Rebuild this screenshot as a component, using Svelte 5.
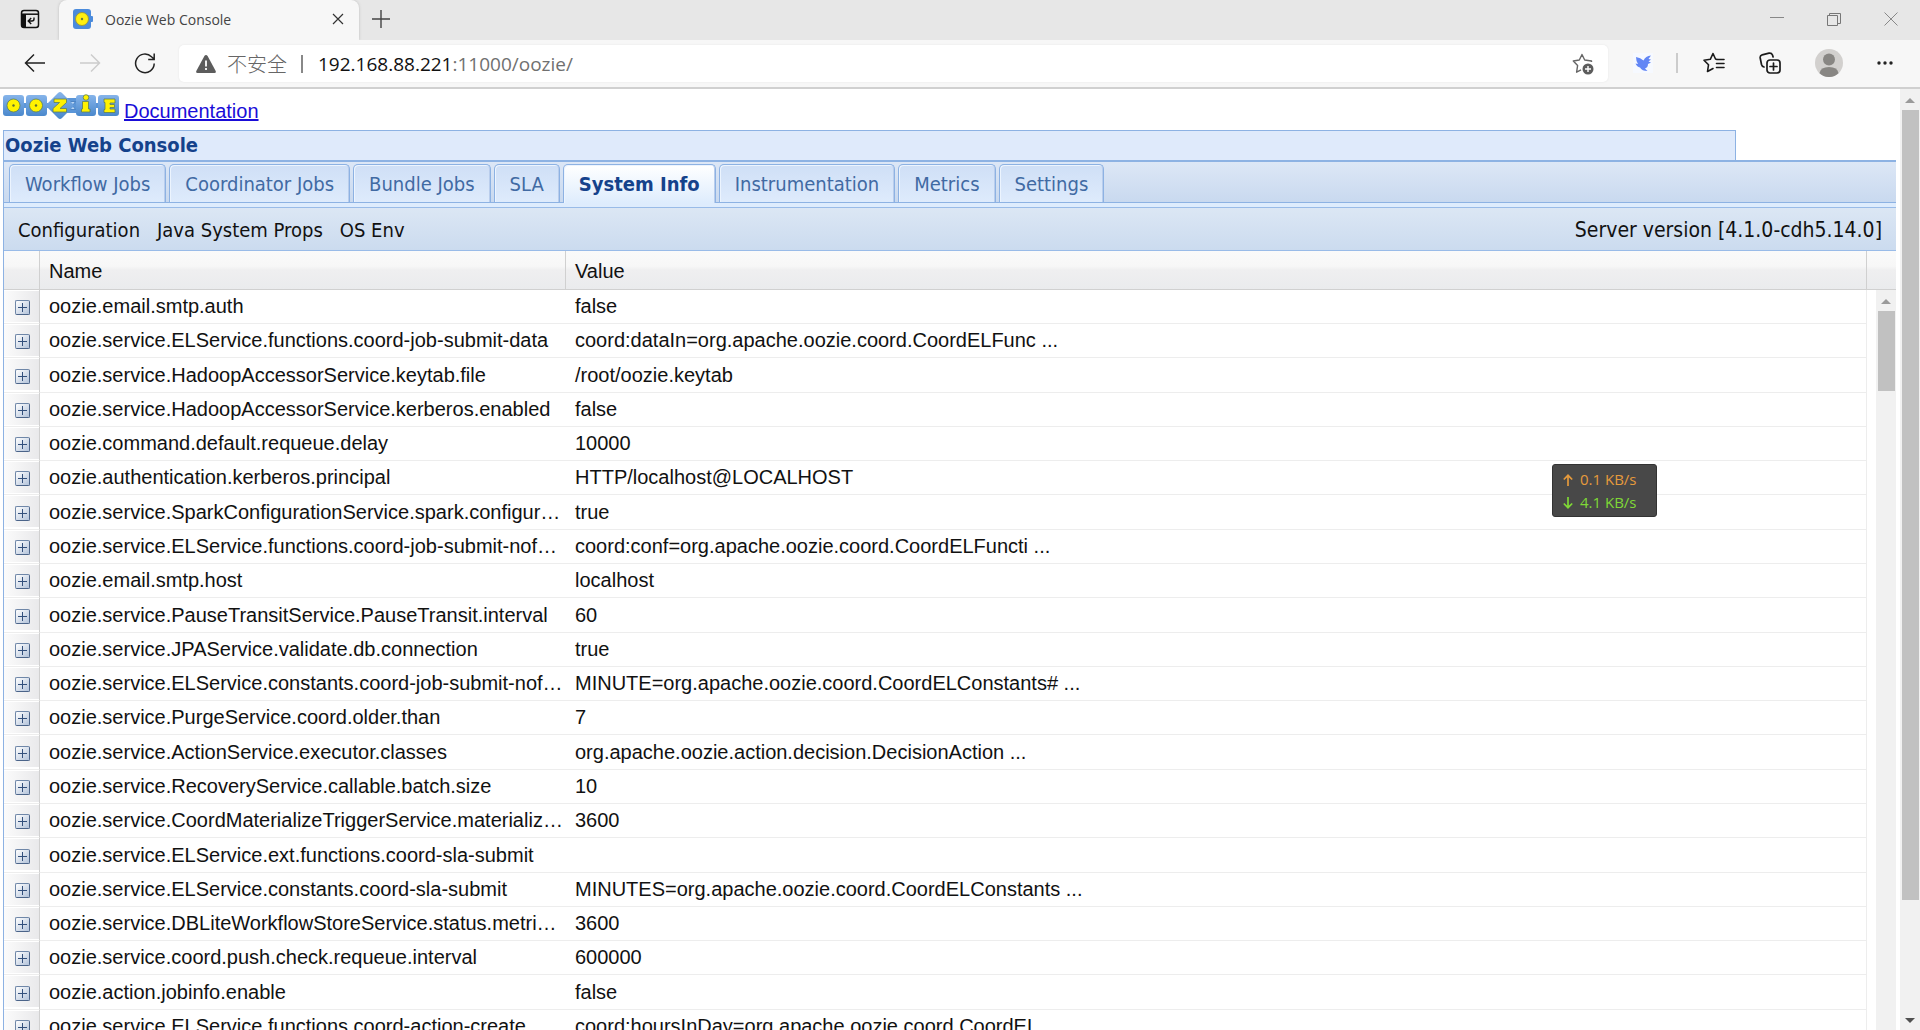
<script>
  const tabs = [
    'Workflow Jobs',
    'Coordinator Jobs',
    'Bundle Jobs',
    'SLA',
    'System Info',
    'Instrumentation',
    'Metrics',
    'Settings'
  ];

  const rows = [
    ['oozie.email.smtp.auth', 'false'],
    ['oozie.service.ELService.functions.coord-job-submit-data', 'coord:dataIn=org.apache.oozie.coord.CoordELFunc ...'],
    ['oozie.service.HadoopAccessorService.keytab.file', '/root/oozie.keytab'],
    ['oozie.service.HadoopAccessorService.kerberos.enabled', 'false'],
    ['oozie.command.default.requeue.delay', '10000'],
    ['oozie.authentication.kerberos.principal', 'HTTP/localhost@LOCALHOST'],
    ['oozie.service.SparkConfigurationService.spark.configur…', 'true'],
    ['oozie.service.ELService.functions.coord-job-submit-nof…', 'coord:conf=org.apache.oozie.coord.CoordELFuncti ...'],
    ['oozie.email.smtp.host', 'localhost'],
    ['oozie.service.PauseTransitService.PauseTransit.interval', '60'],
    ['oozie.service.JPAService.validate.db.connection', 'true'],
    ['oozie.service.ELService.constants.coord-job-submit-nof…', 'MINUTE=org.apache.oozie.coord.CoordELConstants# ...'],
    ['oozie.service.PurgeService.coord.older.than', '7'],
    ['oozie.service.ActionService.executor.classes', 'org.apache.oozie.action.decision.DecisionAction ...'],
    ['oozie.service.RecoveryService.callable.batch.size', '10'],
    ['oozie.service.CoordMaterializeTriggerService.materializ…', '3600'],
    ['oozie.service.ELService.ext.functions.coord-sla-submit', ''],
    ['oozie.service.ELService.constants.coord-sla-submit', 'MINUTES=org.apache.oozie.coord.CoordELConstants ...'],
    ['oozie.service.DBLiteWorkflowStoreService.status.metri…', '3600'],
    ['oozie.service.coord.push.check.requeue.interval', '600000'],
    ['oozie.action.jobinfo.enable', 'false'],
    ['oozie.service.ELService.functions.coord-action-create', 'coord:hoursInDay=org.apache.oozie.coord.CoordEL ...']
  ];

  let active = $state('System Info');
</script>

<div class="window">
  <header class="titlebar">
    <button class="icon-btn tab-actions" aria-label="Tab actions">
      <svg width="20" height="20" viewBox="0 0 20 20" fill="none" stroke="#111" stroke-width="1.5">
        <rect x="1.500" y="1.500" width="17" height="17" rx="2.500" />
        <path d="M1.500 5.200h17" />
        <path d="M4 5v13" stroke-width="4" />
        <path d="M14 8.500v1.500q0 2-2 2H8.800M11.200 9l-3 3 3 3" stroke-width="1.400" />
      </svg>
    </button>
    <div class="browser-tab">
      <svg width="20" height="20" viewBox="0 0 20 20">
        <rect x="0" y="0" width="18" height="20" rx="3" fill="#4b8bdc" />
        <rect x="17" y="7" width="3" height="6" rx="1" fill="#4b8bdc" />
        <circle cx="9" cy="10" r="6.500" fill="#ffef10" stroke="#9c9a3c" />
        <circle cx="9" cy="10" r="1.200" fill="#6d7a3a" />
      </svg>
      <span>Oozie Web Console</span>
      <button class="icon-btn" aria-label="Close tab">
        <svg width="12" height="12" viewBox="0 0 12 12" stroke="#333" stroke-width="1.200"><path d="M1 1l10 10M11 1L1 11" /></svg>
      </button>
    </div>
    <button class="icon-btn new-tab" aria-label="New tab">
      <svg width="18" height="18" viewBox="0 0 18 18" stroke="#444" stroke-width="1.400"><path d="M9 0v18M0 9h18" /></svg>
    </button>
    <div class="controls">
      <button class="icon-btn" aria-label="Minimize">
        <svg width="14" height="14" viewBox="0 0 14 14" stroke="#888"><path d="M0 5.500h14" /></svg>
      </button>
      <button class="icon-btn" aria-label="Restore">
        <svg width="14" height="14" viewBox="0 0 14 14" fill="none" stroke="#777"><path d="M.5 3.500h10v10H.5zM2.500 3.500v-2h11v10h-3" /></svg>
      </button>
      <button class="icon-btn" aria-label="Close">
        <svg width="14" height="14" viewBox="0 0 14 14" stroke="#888"><path d="M.5.5l13 13M13.500.5l-13 13" /></svg>
      </button>
    </div>
  </header>

  <nav class="toolbar">
    <button class="icon-btn" aria-label="Back">
      <svg width="22" height="20" viewBox="0 0 22 20" fill="none" stroke="#222" stroke-width="1.500"><path d="M21 10H2M10 1.500L1.500 10l8.500 8.500" /></svg>
    </button>
    <button class="icon-btn" aria-label="Forward" disabled>
      <svg width="22" height="20" viewBox="0 0 22 20" fill="none" stroke="#ccc" stroke-width="1.500"><path d="M1 10h19M12 1.500l8.500 8.500-8.500 8.500" /></svg>
    </button>
    <button class="icon-btn" aria-label="Refresh">
      <svg width="22" height="22" viewBox="0 0 22 22" fill="none" stroke="#222" stroke-width="1.500"><path d="M20.200 11.500A9.300 9.300 0 1 1 17.500 4.800L20 7M20.200 1.500v6h-6" /></svg>
    </button>
    <div class="address">
      <svg width="20" height="18" viewBox="0 0 20 18">
        <path d="M10 0q1 0 1.600 1l8.100 15q.6 2-1.200 2H1.500Q-.3 18 .3 16L8.400 1Q9 0 10 0z" fill="#5c5c5c" />
        <path d="M10 5.500v6M10 13v2" stroke="#fff" stroke-width="1.800" />
      </svg>
      <span class="insecure">不安全</span>
      <span class="bar"></span>
      <span class="url">192.168.88.221<em>:11000/oozie/</em></span>
      <button class="icon-btn fav" aria-label="Add to favorites">
        <svg width="22" height="22" viewBox="0 0 22 22" fill="none">
          <path d="M19.500 9V8l-6.800-1L10 1.500 7.300 7l-6 1 4.300 4.600-1 6.600 4.400-2.400" stroke="#666" stroke-width="1.400" stroke-linejoin="round" />
          <circle cx="16" cy="16" r="5.500" fill="#5c5c5c" />
          <path d="M16 13v6M13 16h6" stroke="#fff" stroke-width="1.400" />
        </svg>
      </button>
    </div>
    <div class="extras">
      <button class="icon-btn bird" aria-label="Extension">
        <svg width="20" height="20" viewBox="0 0 20 20">
          <path d="M3 4q4.500.5 7.500 3.500Q12.500 3 18 2.500L15.500 6l2.500.5-2.500 2 2.500 1-3 1.500q0 3.500-3 4.500l2.500 2.500Q9 18 7 14.500 4 14 2.500 10.500L5 11Q3 8 3 4z" fill="#6286f5" />
        </svg>
      </button>
      <span class="divider"></span>
      <button class="icon-btn" aria-label="Favorites">
        <svg width="22" height="22" viewBox="0 0 22 22" fill="none" stroke="#1a1a1a" stroke-width="1.600" stroke-linejoin="round" stroke-linecap="round">
          <path d="M14 7.500L12.500 7 10 1.500 7.300 7.300 1 8.200l4.500 4.600-1 6.700L10 16.500M14.500 7.500H21M13.500 11.500H21M13.500 15.500H21" />
        </svg>
      </button>
      <button class="icon-btn" aria-label="Collections">
        <svg width="22" height="22" viewBox="0 0 22 22" fill="none" stroke="#1a1a1a" stroke-width="1.700" stroke-linecap="round">
          <rect x="8" y="8" width="13" height="13" rx="3" />
          <path d="M14.500 11v7M11 14.500h7M5 15q-2-.5-2.500-2.500L1.200 6q-.4-2.500 2-3.200L10 1.200q2.500-.4 3.500 1.800l.6 2" />
        </svg>
      </button>
      <button class="icon-btn" aria-label="Profile">
        <svg width="28" height="28" viewBox="0 0 28 28">
          <circle cx="14" cy="14" r="14" fill="#d2d0ce" />
          <circle cx="14" cy="10.500" r="6" fill="#888683" />
          <path d="M4.500 24.300Q5.500 18 14 18t9.500 6.300A14 14 0 0 1 4.500 24.300z" fill="#888683" />
        </svg>
      </button>
      <button class="icon-btn" aria-label="Settings and more">
        <svg width="16" height="4" viewBox="0 0 16 4" fill="#222"><circle cx="2" cy="2" r="1.700" /><circle cx="8" cy="2" r="1.700" /><circle cx="14" cy="2" r="1.700" /></svg>
      </button>
    </div>
  </nav>

  <div class="viewport">
    <main class="page">
      <div class="brand">
        <svg class="logo" width="116" height="28" viewBox="0 0 116 28" aria-label="Oozie">
          <defs>
            <linearGradient id="tile" x1="0" y1="0" x2="0" y2="1">
              <stop offset="0" stop-color="#86b4ea" />
              <stop offset="1" stop-color="#4a88cc" />
            </linearGradient>
          </defs>
          <path d="M18 13.500h88" stroke="#5b96d8" stroke-width="5" />
          <path d="M60 6h13v15H60z" fill="#5b96d8" />
          <path d="M66 9.500h6.500l-3 4 3 4H66l3-4z" fill="#b9d6f5" stroke="#3f78bd" stroke-width=".8" />
          <g fill="url(#tile)">
            <rect x="0" y="3" width="21" height="21" rx="3" />
            <rect x="23" y="3" width="21" height="21" rx="3" />
            <path d="M55 1q2-2 4 0l11 11q1.500 1.500 0 3L59 26q-2 2-4 0L44 15q-1.500-1.500 0-3z" />
            <rect x="73" y="3" width="20" height="21" rx="3" />
            <rect x="95" y="3" width="21" height="21" rx="3" />
          </g>
          <g fill="#fff200" stroke="#5e7f55" stroke-width=".8">
            <circle cx="10.500" cy="13.500" r="6.500" />
            <circle cx="33" cy="13.500" r="6.500" />
            <path d="M51 7h12.500v3.500l-6.500 6h6.500V20H50v-3.500l6.500-6H51z" />
            <circle cx="83" cy="5.500" r="2.800" />
            <path d="M79.500 9.500h6v7.500h1.500v3h-8.500v-3h1z" />
            <path d="M101 7h11v4h-5v1.500h4.500v3H107V17h5v3.500h-11v-3h1v-7h-1z" />
          </g>
          <circle cx="10.500" cy="13.500" r="1.200" fill="#5e6f35" />
          <circle cx="33" cy="13.500" r="1.200" fill="#5e6f35" />
        </svg>
        <a href="#docs">Documentation</a>
      </div>

      <h1>Oozie Web Console</h1>

      <section class="panel">
        <div class="tabs" role="tablist">
          {#each tabs as tab}
            <button role="tab" class="tab" class:active={tab === active} aria-selected={tab === active} onclick={() => (active = tab)}>
              {tab}
            </button>
          {/each}
        </div>

        <div class="actions">
          <button>Configuration</button>
          <button>Java System Props</button>
          <button>OS Env</button>
          <span class="version">Server version [4.1.0-cdh5.14.0]</span>
        </div>

        <div class="grid">
          <div class="grid-main">
            <table>
              <thead>
                <tr>
                  <th class="exp"></th>
                  <th class="name">Name</th>
                  <th>Value</th>
                </tr>
              </thead>
              <tbody>
                {#each rows as [name, value]}
                  <tr>
                    <td class="exp"><button class="expander" aria-label="Expand {name}"></button></td>
                    <td>{name}</td>
                    <td>{value}</td>
                  </tr>
                {/each}
              </tbody>
            </table>
          </div>
          <div class="grid-side">
            <div class="side-head"></div>
            <div class="scroll inner">
              <span class="arrow up"></span>
              <span class="thumb"></span>
            </div>
          </div>
        </div>
      </section>
    </main>

    <div class="scroll outer">
      <span class="arrow up"></span>
      <span class="thumb"></span>
      <span class="arrow down"></span>
    </div>
  </div>

  <aside class="netspeed">
    <div class="sent">
      <svg width="10" height="12" viewBox="0 0 10 12" fill="none" stroke="currentColor" stroke-width="1.700"><path d="M5 12V1.500M.8 5.500L5 1.300l4.200 4.200" /></svg>
      0.1 KB/s
    </div>
    <div class="received">
      <svg width="10" height="12" viewBox="0 0 10 12" fill="none" stroke="currentColor" stroke-width="1.700"><path d="M5 0v10.500M.8 6.500L5 10.700l4.200-4.200" /></svg>
      4.1 KB/s
    </div>
  </aside>
</div>

<style>
:global(body) {
  margin: 0;
  background: white;
}

.window {
  height: 100vh;
  display: flex;
  flex-direction: column;
  overflow: hidden;
  font-family: "Liberation Sans", Arial, sans-serif;
  font-size: 20px;
  color: #111;
}

button {
  font: inherit;
  color: inherit;
  background: none;
  border: none;
  padding: 0;
  cursor: pointer;
}

svg {
  display: block;
  flex: none;
}

.icon-btn {
  display: flex;
}

/* browser chrome */
.titlebar {
  flex: none;
  height: 40px;
  box-sizing: border-box;
  display: flex;
  align-items: center;
  padding-bottom: 2px;
  background: #e7e7e7;
}

.tab-actions {
  padding: 0 19px 0 20px;
}

.browser-tab {
  width: 300px;
  height: 40px;
  box-sizing: border-box;
  display: flex;
  align-items: center;
  align-self: flex-start;
  padding: 0 15px 2px 14px;
  background: #f7f7f7;
  border-radius: 8px 8px 0 0;
  box-shadow: 0 0 3px #bbb;
  font: 14px "Open Sans", "Noto Sans", sans-serif;
  color: #444;
}

.browser-tab span {
  flex: 1;
  margin-left: 12px;
}

.new-tab {
  margin-left: 13px;
}

.controls {
  margin-left: auto;
  display: flex;
  gap: 43px;
  padding-right: 22px;
}

.toolbar {
  flex: none;
  height: 47px;
  display: flex;
  align-items: center;
  gap: 33px;
  padding-left: 24px;
  background: #f7f7f7;
  border-bottom: 2px solid #d0d0d0;
}

.toolbar > .icon-btn,
.extras {
  padding-bottom: 1px;
}

.address {
  flex: 1;
  height: 37px;
  display: flex;
  align-items: center;
  margin-left: -10px;
  padding: 0 14px 0 17px;
  background: white;
  border-radius: 5px;
  font-family: "Open Sans", "Noto Sans", "Noto Sans CJK SC", sans-serif;
  font-size: 19px;
  box-shadow: 0 0 2px #e4e4e4;
}

.insecure {
  margin-left: 11px;
  font-family: "Noto Sans CJK SC", sans-serif;
  font-size: 20px;
  font-weight: 300;
  color: #666;
}

.bar {
  width: 2px;
  height: 18px;
  margin: 0 15px 0 14px;
  background: #888;
}

.url em {
  font-style: normal;
  color: #707070;
}

.fav {
  margin-left: auto;
}

.extras {
  display: flex;
  align-items: center;
  gap: 34px;
  padding-right: 27px;
  margin-left: -8px;
}

.bird {
  background: #f6f9ff;
}

.divider {
  width: 2px;
  height: 20px;
  margin: 0 -9px 0 -11px;
  background: #ccc;
}

/* page */
.viewport {
  flex: 1;
  min-height: 0;
  display: flex;
  align-items: stretch;
}

.page {
  flex: 1;
  min-width: 0;
  display: flex;
  flex-direction: column;
  padding: 3px 4px 0 3px;
  overflow: hidden;
}

.brand {
  flex: none;
  height: 38px;
  display: flex;
  align-items: flex-start;
  gap: 5px;
}

.brand a {
  margin-top: 7px;
  line-height: 24px;
  color: #1a0dd8;
}

h1 {
  flex: none;
  width: 91%;
  height: 29px;
  margin: 0;
  padding: 0 7px 0 1px;
  border: 1px solid #8db2e3;
  border-bottom: none;
  background: #dfeafb;
  font: bold 20px/28px "DejaVu Sans Condensed", Tahoma, sans-serif;
  color: #15428b;
}

.panel {
  flex: 1;
  min-height: 0;
  display: flex;
  flex-direction: column;
  border-left: 1px solid #8db2e3;
  border-top: 2px solid #8db2e3;
}

.tabs {
  flex: none;
  height: 41px;
  box-sizing: border-box;
  display: flex;
  align-items: flex-end;
  gap: 3px;
  padding-left: 5px;
  background: linear-gradient(#dde7f6, #c9d9ef);
  border-bottom: 1px solid #8db2e3;
  font-family: "DejaVu Sans Condensed", Tahoma, sans-serif;
  font-size: 20px;
}

.tab {
  height: 38px;
  padding: 0 15px;
  border: 1px solid #8db2e3;
  border-bottom: none;
  border-radius: 5px 5px 0 0;
  background: linear-gradient(#cfdff6, #deebfc);
  box-shadow: inset 1px 1px 0 #ecf4fe, inset -1px 0 0 #b9cdec;
  color: #416aa3;
  white-space: nowrap;
}

.tab.active {
  height: 39px;
  margin-bottom: -1px;
  background: linear-gradient(white, #deecfd);
  color: #15428b;
  font-weight: bold;
}

.actions {
  flex: none;
  height: 48px;
  box-sizing: border-box;
  display: flex;
  align-items: center;
  gap: 17px;
  padding: 2px 14px 0;
  border-top: 4px solid #deecfd;
  border-bottom: 1px solid #99bbe8;
  box-shadow: inset 0 1px 0 #99bbe8;
  background: linear-gradient(#dce7f4, #cbdbef);
  font-family: "DejaVu Sans Condensed", Tahoma, sans-serif;
  font-size: 20px;
}

.version {
  margin-left: auto;
  font-size: 21px;
}

.grid {
  flex: 1;
  min-height: 0;
  display: flex;
}

.grid-main {
  flex: 1;
  overflow: hidden;
}

table {
  width: 100%;
  table-layout: fixed;
  border-collapse: separate;
  border-spacing: 0;
}

th,
td {
  box-sizing: border-box;
  padding: 0 0 0 9px;
  text-align: left;
  font-weight: normal;
  white-space: nowrap;
}

th {
  height: 39px;
  padding-top: 2px;
  background: linear-gradient(#fafafa 0, #f7f7f7 40%, #efeff0 50%, #eaebed);
  border-right: 1px solid #d0d0d0;
  border-bottom: 1px solid #d0d0d0;
}

td {
  height: 34px;
  border-bottom: 1px solid #ededed;
}

tr:nth-child(7n) td,
tr:nth-child(7n + 3) td {
  height: 35px;
}

td:last-child {
  border-right: 1px solid #ededed;
}

.name {
  width: 526px;
}

.exp {
  width: 36px;
  padding: 0;
}

td.exp {
  background: linear-gradient(to right, #fbfbfb, #e9e9eb) no-repeat 0 1px / 100% 31px;
  border-right: 1px solid #d0d0d0;
}

.expander {
  display: block;
  width: 15px;
  height: 15px;
  margin: 2px 0 0 11px;
  border: 1px solid #6f87a8;
  border-right-color: #4b6489;
  border-bottom-color: #4b6489;
  border-radius: 2px;
  background:
    linear-gradient(#33507c, #33507c) center / 9px 1px no-repeat,
    linear-gradient(#33507c, #33507c) center / 1px 9px no-repeat,
    linear-gradient(135deg, #fff, #b3c3da);
}

.grid-side {
  width: 29px;
  display: flex;
  flex-direction: column;
}

.side-head {
  height: 38px;
  background: linear-gradient(#fafafa 0, #f7f7f7 40%, #efeff0 50%, #eaebed);
  border-bottom: 1px solid #d0d0d0;
}

.scroll {
  display: flex;
  flex-direction: column;
  align-items: center;
  background: #f1f1f1;
}

.inner {
  flex: 1;
  width: 20px;
  margin-left: auto;
}

.outer {
  width: 20px;
}

.arrow {
  width: 0;
  border: 5px solid transparent;
}

.arrow.up {
  margin: 9px 0 7px;
  border-top: none;
  border-bottom-color: #9a9a9a;
}

.arrow.down {
  margin: auto 0 7px;
  border-bottom: none;
  border-top-color: #505050;
}

.thumb {
  width: 17px;
  background: #c1c1c1;
}

.inner .thumb {
  height: 80px;
}

.outer .thumb {
  height: 84%;
}

/* network speed overlay, floats over the page */
.netspeed {
  position: absolute;
  left: 1552px;
  top: 464px;
  width: 105px;
  height: 53px;
  box-sizing: border-box;
  padding: 3px 0 0 10px;
  border: 1px solid #333;
  border-radius: 3px;
  background: #484848;
  font: 15px/23px "Open Sans", "Noto Sans", sans-serif;
}

.netspeed div {
  display: flex;
  align-items: center;
  gap: 7px;
}

.sent {
  color: #e59a3c;
}

.received {
  color: #7fd836;
}
</style>
